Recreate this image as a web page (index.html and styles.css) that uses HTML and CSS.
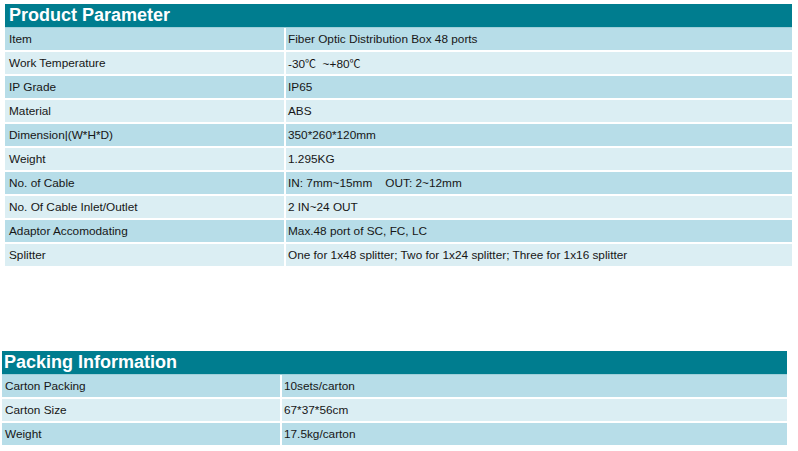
FILE: index.html
```html
<!DOCTYPE html>
<html lang="en">
<head>
<meta charset="utf-8">
<title>Product Parameter</title>
<link rel="stylesheet" href="styles.css">
</head>
<body>
  <section class="panel panel-product">
    <h2 class="title">Product Parameter</h2>
    <div class="grid">
      <div class="row odd"><div class="cell">Item</div><div class="cell val">Fiber Optic Distribution Box 48 ports</div></div>
      <div class="row even"><div class="cell">Work Temperature</div><div class="cell val">-30<span class="deg">℃</span>  ~+80<span class="deg">℃</span></div></div>
      <div class="row odd"><div class="cell">IP Grade</div><div class="cell val">IP65</div></div>
      <div class="row even"><div class="cell">Material</div><div class="cell val">ABS</div></div>
      <div class="row odd"><div class="cell">Dimension|(W*H*D)</div><div class="cell val">350*260*120mm</div></div>
      <div class="row even"><div class="cell">Weight</div><div class="cell val">1.295KG</div></div>
      <div class="row odd"><div class="cell">No. of Cable</div><div class="cell val">IN: 7mm~15mm    OUT: 2~12mm</div></div>
      <div class="row even"><div class="cell">No. Of Cable Inlet/Outlet</div><div class="cell val">2 IN~24 OUT</div></div>
      <div class="row odd"><div class="cell">Adaptor Accomodating</div><div class="cell val">Max.48 port of SC, FC, LC</div></div>
      <div class="row even"><div class="cell">Splitter</div><div class="cell val">One for 1x48 splitter; Two for 1x24 splitter; Three for 1x16 splitter</div></div>
    </div>
  </section>

  <section class="panel panel-packing">
    <h2 class="title">Packing Information</h2>
    <div class="grid">
      <div class="row odd"><div class="cell">Carton Packing</div><div class="cell val">10sets/carton</div></div>
      <div class="row even"><div class="cell">Carton Size</div><div class="cell val">67*37*56cm</div></div>
      <div class="row odd"><div class="cell">Weight</div><div class="cell val">17.5kg/carton</div></div>
    </div>
  </section>
</body>
</html>
```

FILE: styles.css
```css
html, body {
  margin: 0;
  padding: 0;
  background: #ffffff;
}

body {
  font-family: "Liberation Sans", Arial, "DejaVu Sans", "Noto Sans CJK SC", sans-serif;
  color: #161616;
}

.panel {
  display: flex;
  flex-direction: column;
}

.panel-product {
  margin: 4px 0 0 5px;
  width: 787px;
}

.panel-packing {
  margin: 83px 0 0 2px;
  width: 785px;
}

.title {
  margin: 0;
  height: 23px;
  line-height: 23px;
  background: #007d8f;
  color: #ffffff;
  font-size: 18px;
  font-weight: bold;
  padding-left: 4px;
  border-bottom: 1px solid #9fcfd9;
}

.panel-packing .title {
  padding-left: 2px;
}

.row {
  display: grid;
  column-gap: 2px;
  border-bottom: 2px solid #ffffff;
}

.panel-product .row {
  grid-template-columns: 279px 1fr;
}

.panel-packing .row {
  grid-template-columns: 278px 1fr;
}

.cell {
  height: 22px;
  line-height: 22px;
  font-size: 11.8px;
  padding-left: 4px;
  white-space: pre;
  overflow: hidden;
}

.deg {
  font-family: "Noto Sans CJK SC", "DejaVu Sans", sans-serif;
  font-size: 11px;
}

.panel-packing .cell {
  padding-left: 3px;
}

.cell.val {
  padding-left: 2px;
}

.odd .cell {
  background: #b7dde8;
}

.even .cell {
  background: #dbeef3;
}
```
